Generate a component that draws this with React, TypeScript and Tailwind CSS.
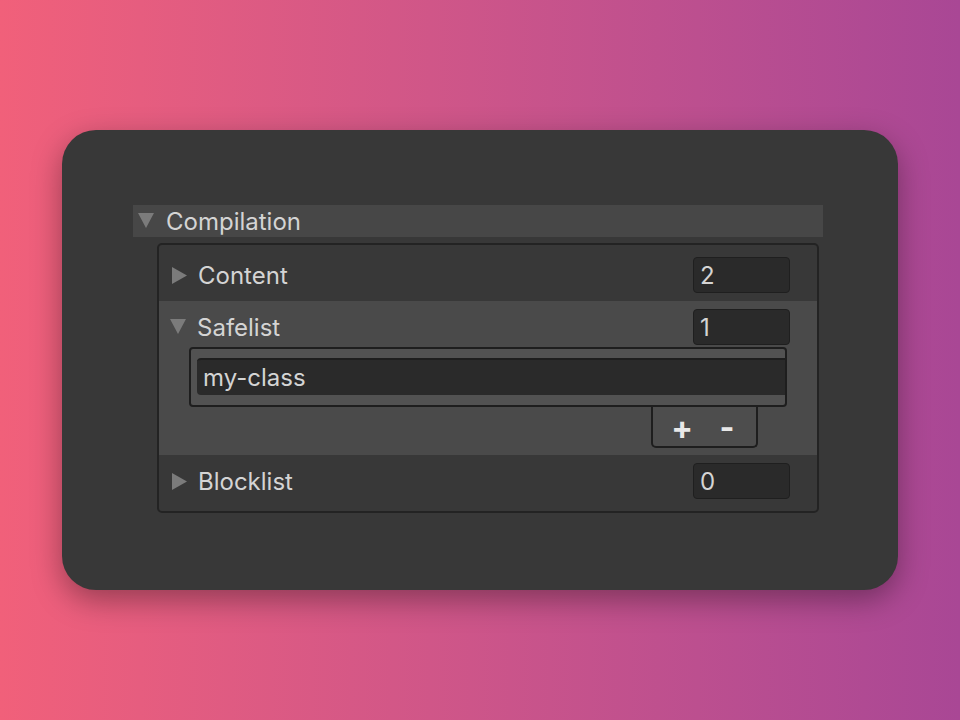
const TriangleRight = () => (
  <svg width="15" height="17" viewBox="0 0 15 17" className="shrink-0">
    <polygon points="0,0 15,8.5 0,17" fill="#7b7b7b" />
  </svg>
);

const TriangleDown = () => (
  <svg width="16" height="16" viewBox="0 0 16 16" className="shrink-0">
    <polygon points="0,0 16,0 8,15" fill="#7b7b7b" />
  </svg>
);

const NumberField = ({ value }: { value: string }) => (
  <div className="ml-auto mr-[27px] flex h-9 w-[97px] items-center rounded-[4px] border border-[#1f1f1f] bg-[#2a2a2a] pl-[6px] pt-[2px] text-[24px] text-[#d4d4d4]">
    {value}
  </div>
);

export default function App() {
  return (
    <div
      className="flex min-h-screen w-full items-center justify-center bg-gradient-to-r from-[#f1607a] to-[#a94795]"
      style={{ fontFamily: "Inter, 'Noto Sans', sans-serif" }}
    >
      <div className="h-[460px] w-[836px] rounded-[34px] bg-[#383838] pl-[71px] pr-[75px] pt-[75px] shadow-[0_10px_30px_rgba(0,0,0,0.35)]">
        {/* Foldout header */}
        <div className="flex h-8 items-center gap-3 bg-[#474747] pl-[5px]">
          <TriangleDown />
          <span className="pt-[2px] text-[24px] text-[#d4d4d4]">Compilation</span>
        </div>

        {/* Foldout body */}
        <div className="ml-6 mr-1 mt-[6px] rounded-[5px] border-2 border-[#232323] py-1">
          {/* Content */}
          <div className="flex h-[52px] items-center gap-[11px] pl-[13px]">
            <TriangleRight />
            <span className="pt-[2px] text-[24px] text-[#d4d4d4]">Content</span>
            <NumberField value="2" />
          </div>

          {/* Safelist */}
          <div className="bg-[#4a4a4a] pb-[7px] pt-2">
            <div className="flex h-9 items-center gap-[11px] pl-[11px]">
              <TriangleDown />
              <span className="pt-[2px] text-[24px] text-[#d4d4d4]">Safelist</span>
              <NumberField value="1" />
            </div>
            <div className="ml-[30px] mr-[30px] mt-[2px] rounded-[4px] border-2 border-[#1e1e1e] bg-[#525252] pb-[10px] pl-[6px] pt-[9px]">
              <div className="flex h-[37px] items-center rounded-l-[4px] border-t-2 border-[#1e1e1e] bg-[#2a2a2a] pl-[6px] text-[24px] text-[#d4d4d4]">
                my-class
              </div>
            </div>
            <div className="ml-auto mr-[59px] flex h-[41px] w-[107px] items-center justify-center rounded-b-[5px] border-2 border-t-0 border-[#1e1e1e] bg-[#4d4d4d] pt-[2px]">
              <span className="w-[45px] text-center text-[32px] font-bold leading-none text-[#e8e8e8]">+</span>
              <span className="w-[45px] text-center text-[32px] font-bold leading-none text-[#e8e8e8]">-</span>
            </div>
          </div>

          {/* Blocklist */}
          <div className="flex h-[52px] items-center gap-[11px] pl-[13px]">
            <TriangleRight />
            <span className="pt-[2px] text-[24px] text-[#d4d4d4]">Blocklist</span>
            <NumberField value="0" />
          </div>
        </div>
      </div>
    </div>
  );
}
